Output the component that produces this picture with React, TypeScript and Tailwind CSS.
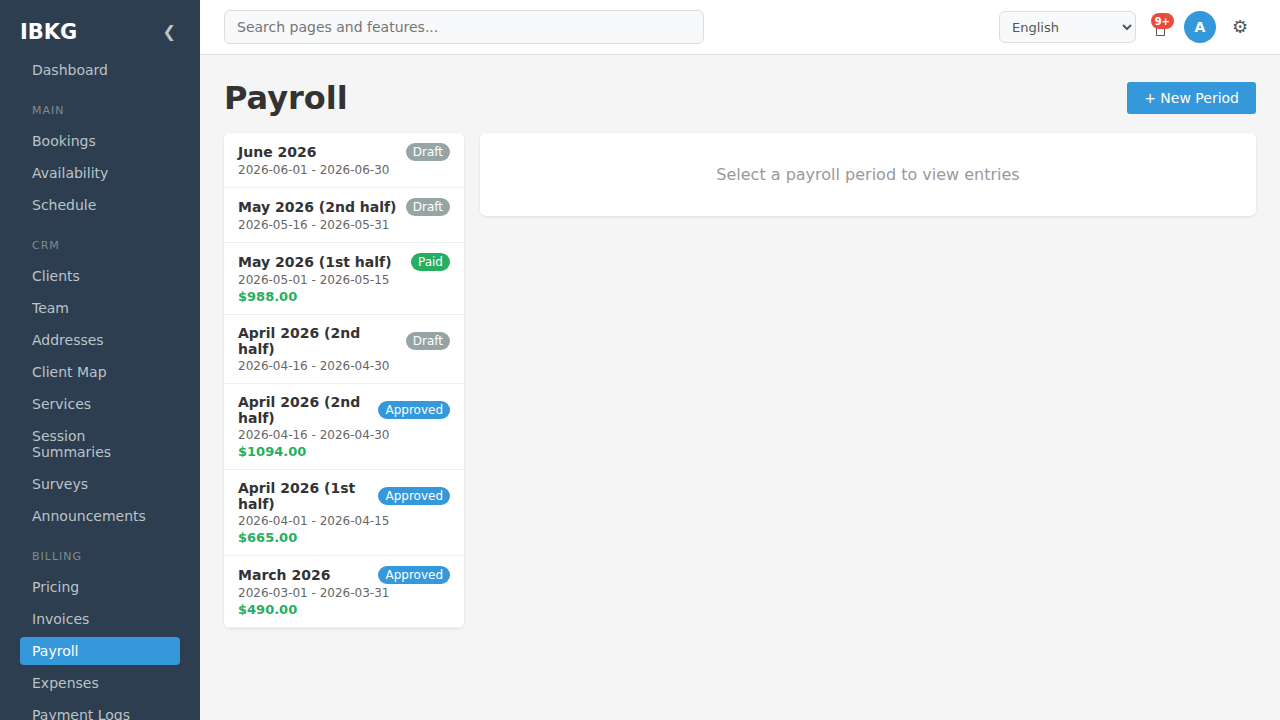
import { clsx } from 'clsx'

interface NavGroup {
  title?: string
  items: string[]
}

interface Period {
  name: string
  start: string
  end: string
  status: 'Draft' | 'Paid' | 'Approved'
  total?: string
}

const NAV: NavGroup[] = [
  { items: ['Dashboard'] },
  { title: 'Main', items: ['Bookings', 'Availability', 'Schedule'] },
  {
    title: 'CRM',
    items: ['Clients', 'Team', 'Addresses', 'Client Map', 'Services', 'Session Summaries', 'Surveys', 'Announcements'],
  },
  { title: 'Billing', items: ['Pricing', 'Invoices', 'Payroll', 'Expenses', 'Payment Logs'] },
]

const PERIODS: Period[] = [
  { name: 'June 2026', start: '2026-06-01', end: '2026-06-30', status: 'Draft' },
  { name: 'May 2026 (2nd half)', start: '2026-05-16', end: '2026-05-31', status: 'Draft' },
  { name: 'May 2026 (1st half)', start: '2026-05-01', end: '2026-05-15', status: 'Paid', total: '$988.00' },
  { name: 'April 2026 (2nd half)', start: '2026-04-16', end: '2026-04-30', status: 'Draft' },
  { name: 'April 2026 (2nd half)', start: '2026-04-16', end: '2026-04-30', status: 'Approved', total: '$1094.00' },
  { name: 'April 2026 (1st half)', start: '2026-04-01', end: '2026-04-15', status: 'Approved', total: '$665.00' },
  { name: 'March 2026', start: '2026-03-01', end: '2026-03-31', status: 'Approved', total: '$490.00' },
]

const STATUS_COLORS = {
  Draft: 'bg-[#95a5a6]',
  Paid: 'bg-[#27ae60]',
  Approved: 'bg-[#3498db]',
}

function Sidebar({ active }: { active: string }) {
  return (
    <aside className="w-[200px] shrink-0 overflow-y-auto bg-[#2c3e50] px-5 py-5 [scrollbar-width:none]">
      <div className="mb-3 flex h-6 items-center justify-between">
        <span className="text-[21px] leading-6 font-bold text-white">IBKG</span>
        <button type="button" aria-label="Collapse sidebar" className="px-1 text-base text-[#bdc3c7]">
          ❮
        </button>
      </div>
      <nav>
        {NAV.map((group, i) => (
          <div key={i}>
            {group.title && (
              <h2 className="mt-5 mb-[10px] px-3 text-[11px] leading-[13px] tracking-[1px] text-[#7f8c8d] uppercase">
                {group.title}
              </h2>
            )}
            <ul className="flex flex-col gap-1">
              {group.items.map((item) => (
                <li key={item}>
                  <a
                    href="#"
                    className={clsx(
                      'block rounded px-3 py-[6px] text-sm leading-4',
                      item === active ? 'bg-[#3498db] text-white' : 'text-[#bdc3c7]',
                    )}
                  >
                    {item}
                  </a>
                </li>
              ))}
            </ul>
          </div>
        ))}
      </nav>
    </aside>
  )
}

function TopBar() {
  return (
    <header className="flex items-center justify-between border-b border-[#dddddd] bg-white px-6 py-[10px]">
      <input
        type="search"
        aria-label="Search"
        placeholder="Search pages and features..."
        className="h-[34px] w-[480px] rounded-md border border-[#dddddd] bg-[#f8f9fa] px-3 text-sm placeholder:text-[#757575]"
      />
      <div className="flex items-center gap-2">
        <select
          aria-label="Language"
          className="h-8 w-[137px] rounded-md border border-[#dddddd] bg-[#f8f9fa] px-2 text-[13px] text-[#555555]"
        >
          <option>English</option>
          <option>Español</option>
        </select>
        <button
          type="button"
          aria-label="Notifications"
          className="relative flex size-8 items-center justify-center text-[#555555]"
        >
          <svg width="10" height="18" viewBox="0 0 10 18" fill="none" stroke="currentColor" aria-hidden="true">
            <path d="M1.5 3.5h8v14h-8z" />
          </svg>
          <span className="absolute top-[2px] right-[2px] flex h-4 items-center rounded-lg bg-[#e74c3c] px-1 text-[10px] font-bold text-white">
            9+
          </span>
        </button>
        <button
          type="button"
          aria-label="Account"
          className="size-8 rounded-full bg-[#3498db] text-sm font-bold text-white"
        >
          A
        </button>
        <button type="button" aria-label="Settings" className="size-8 text-lg leading-8 text-[#555555]">
          ⚙
        </button>
      </div>
    </header>
  )
}

function PeriodRow({ period }: { period: Period }) {
  return (
    <li className="border-b border-[#eeeeee]">
      <button type="button" className="block w-full px-[14px] py-[10px] text-left">
        <span className="flex min-h-[18px] items-center justify-between gap-1">
          <span className="text-sm leading-4 font-bold">{period.name}</span>
          <span
            className={clsx(
              'h-[18px] rounded-full px-[7px] text-xs leading-[18px] text-white',
              STATUS_COLORS[period.status],
            )}
          >
            {period.status}
          </span>
        </span>
        <span className="mt-[2px] block text-xs leading-[14px] text-[#666666]">
          {period.start} - {period.end}
        </span>
        {period.total && (
          <span className="mt-[2px] block text-[13px] leading-[15px] font-bold text-[#27ae60]">{period.total}</span>
        )}
      </button>
    </li>
  )
}

export default function App() {
  return (
    <div className="flex h-screen bg-[#f5f5f5] font-['DejaVu_Sans',sans-serif] text-[#333333]">
      <Sidebar active="Payroll" />
      <div className="flex min-w-0 flex-1 flex-col">
        <TopBar />
        <main className="flex-1 overflow-y-auto p-6">
          <div className="mb-4 flex items-center justify-between">
            <h1 className="text-[32px] leading-[38px] font-bold">Payroll</h1>
            <button type="button" className="h-8 rounded-[3px] bg-[#3498db] px-[17px] text-sm text-white">
              + New Period
            </button>
          </div>
          <div className="grid grid-cols-[240px_1fr] items-start gap-4">
            <ul className="overflow-hidden rounded-md bg-white shadow-[0_1px_3px_rgba(0,0,0,0.1)]">
              {PERIODS.map((period, i) => (
                <PeriodRow key={i} period={period} />
              ))}
            </ul>
            <section className="rounded-md bg-white p-8 text-center shadow-[0_1px_3px_rgba(0,0,0,0.1)]">
              <p className="text-base leading-[19px] text-[#999999]">Select a payroll period to view entries</p>
            </section>
          </div>
        </main>
      </div>
    </div>
  )
}
